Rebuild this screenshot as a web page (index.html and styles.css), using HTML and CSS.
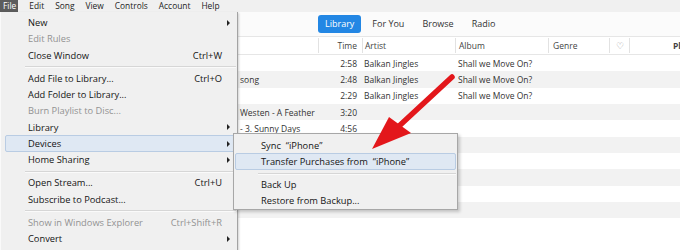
FILE: index.html
```html
<!DOCTYPE html>
<html lang="en">
<head>
    <meta charset="UTF-8">
    <title>iTunes - File menu</title>
    <link rel="stylesheet" href="styles.css">
</head>
<body>
    <div class="app">
        <div class="menubar">
            <span class="mb-item active">File</span>
            <span class="mb-item">Edit</span>
            <span class="mb-item">Song</span>
            <span class="mb-item">View</span>
            <span class="mb-item">Controls</span>
            <span class="mb-item">Account</span>
            <span class="mb-item">Help</span>
        </div>

        <div class="toolbar">
            <span class="tab selected">Library</span>
            <span class="tab">For You</span>
            <span class="tab">Browse</span>
            <span class="tab">Radio</span>
        </div>

        <div class="songs">
            <div class="row head">
                <div class="c-name"></div>
                <div class="c-time">Time</div>
                <div class="c-artist">Artist</div>
                <div class="c-album">Album</div>
                <div class="c-genre">Genre</div>
                <div class="c-heart">&#9825;</div>
                <div class="c-plays">Pl</div>
            </div>
            <div class="row">
                <div class="c-name"></div>
                <div class="c-time">2:58</div>
                <div class="c-artist">Balkan Jingles</div>
                <div class="c-album">Shall we Move On?</div>
                <div class="c-genre"></div><div class="c-heart"></div><div class="c-plays"></div>
            </div>
            <div class="row">
                <div class="c-name">song</div>
                <div class="c-time">2:48</div>
                <div class="c-artist">Balkan Jingles</div>
                <div class="c-album">Shall we Move On?</div>
                <div class="c-genre"></div><div class="c-heart"></div><div class="c-plays"></div>
            </div>
            <div class="row">
                <div class="c-name"></div>
                <div class="c-time">2:29</div>
                <div class="c-artist">Balkan Jingles</div>
                <div class="c-album">Shall we Move On?</div>
                <div class="c-genre"></div><div class="c-heart"></div><div class="c-plays"></div>
            </div>
            <div class="row">
                <div class="c-name">Westen - A Feather</div>
                <div class="c-time">3:20</div>
                <div class="c-artist"></div><div class="c-album"></div>
                <div class="c-genre"></div><div class="c-heart"></div><div class="c-plays"></div>
            </div>
            <div class="row">
                <div class="c-name">- 3. Sunny Days</div>
                <div class="c-time">4:56</div>
                <div class="c-artist"></div><div class="c-album"></div>
                <div class="c-genre"></div><div class="c-heart"></div><div class="c-plays"></div>
            </div>
            <div class="row"></div>
            <div class="row"></div>
            <div class="row"></div>
            <div class="row"></div>
            <div class="row"></div>
            <div class="row"></div>
        </div>

        <div class="menu file-menu">
            <div class="item">New<span class="sub-arrow"></span></div>
            <div class="item disabled">Edit Rules</div>
            <div class="item">Close Window<span class="shortcut">Ctrl+W</span></div>
            <div class="sep"></div>
            <div class="item">Add File to Library...<span class="shortcut">Ctrl+O</span></div>
            <div class="item">Add Folder to Library...</div>
            <div class="item disabled">Burn Playlist to Disc...</div>
            <div class="item">Library<span class="sub-arrow"></span></div>
            <div class="item hl">Devices<span class="sub-arrow"></span></div>
            <div class="item">Home Sharing<span class="sub-arrow"></span></div>
            <div class="sep"></div>
            <div class="item">Open Stream...<span class="shortcut">Ctrl+U</span></div>
            <div class="item">Subscribe to Podcast...</div>
            <div class="sep"></div>
            <div class="item disabled">Show in Windows Explorer<span class="shortcut">Ctrl+Shift+R</span></div>
            <div class="item">Convert<span class="sub-arrow"></span></div>
        </div>

        <div class="menu device-menu">
            <div class="item">Sync &nbsp;&ldquo;iPhone&rdquo;</div>
            <div class="item hl">Transfer Purchases from &nbsp;&ldquo;iPhone&rdquo;</div>
            <div class="sep"></div>
            <div class="item">Back Up</div>
            <div class="item">Restore from Backup...</div>
        </div>

        <svg class="pointer" viewBox="0 0 680 250" width="680" height="250">
            <line x1="452" y1="77" x2="398" y2="127" stroke="#e3171b" stroke-width="5.5" stroke-linecap="round"/>
            <polygon points="372,149 389,117 411,133" fill="#e3171b"/>
        </svg>
    </div>
</body>
</html>
```

FILE: styles.css
```css
* {
    box-sizing: border-box;
}

body {
    margin: 0;
    font-family: "Open Sans", "Noto Sans", sans-serif;
    color: #222;
    background-color: #fff;
}

.app {
    position: relative;
    width: 680px;
    height: 250px;
    overflow: hidden;
    background-color: #fff;
}

/* top menu bar */
.menubar {
    display: flex;
    gap: 11px;
    height: 12px;
    background-color: #f0f0f0;
    font-size: 8.4px;
    line-height: 12px;
    color: #222;
}

.mb-item.active {
    padding: 0 2px 0 3px;
    background-color: #5c5c5c;
    color: #fff;
}

/* library tabs */
.toolbar {
    display: flex;
    align-items: center;
    gap: 4px;
    height: 24px;
    padding-left: 318px;
    background-color: #fbfbfb;
    font-size: 9px;
}

.tab {
    padding: 0 7px;
    height: 18px;
    line-height: 18px;
    color: #333;
}

.tab.selected {
    background-color: #2387e4;
    color: #fff;
    border-radius: 3px;
}

/* song list */
.row {
    display: grid;
    grid-template-columns: 318px 44px 93px 93px 61px 20px 51px;
    align-items: center;
    height: 16.3px;
    font-size: 8.5px;
    color: #333;
    white-space: nowrap;
}

.row:nth-child(odd) {
    background-color: #f2f2f2;
}

.row.head {
    height: 19.2px;
    background-color: #fff;
    border-top: 1px solid #e6e6e6;
    border-bottom: 1px solid #e6e6e6;
    color: #444;
}

.row.head > div {
    height: 15px;
    line-height: 15px;
    border-left: 1px solid #e2e2e2;
}

.row.head > .c-name {
    border-left: none;
}

.c-name {
    padding-left: 240px;
    overflow: hidden;
}

.c-time {
    text-align: right;
    padding-right: 5px;
}

.c-artist {
    padding-left: 2px;
}

.c-album {
    padding-left: 3px;
}

.c-genre {
    padding-left: 4px;
}

.c-heart {
    text-align: center;
    color: #999;
    font-size: 9px;
}

.c-plays {
    padding-left: 43px;
    font-weight: bold;
    overflow: hidden;
}

/* dropdown menus */
.menu {
    position: absolute;
    background-color: #f0f0f0;
    font-size: 9.3px;
    color: #141414;
    white-space: nowrap;
}

.file-menu {
    left: 0;
    top: 12px;
    width: 238px;
    height: 250px;
    padding-top: 2.4px;
    border-left: 1px solid #fafafa;
    border-right: 1px solid #a3a3a3;
    box-shadow: 1px 1px 2px rgba(0, 0, 0, 0.18);
}

.device-menu {
    left: 233px;
    top: 133px;
    width: 225px;
    height: 77px;
    padding-top: 3px;
    border: 1px solid #a7a7a7;
    box-shadow: 2px 2px 3px rgba(0, 0, 0, 0.2);
}

.item {
    display: flex;
    align-items: center;
    height: 16.3px;
    margin: 0 1px 0 4px;
    padding-left: 22px;
    border: 1px solid transparent;
    border-radius: 2px;
}

.device-menu .item {
    margin: 0 1px;
    padding-left: 25px;
}

.item.hl {
    background-color: #dfe8f3;
    border-color: #b9cce3;
}

.item.disabled {
    color: #929292;
}

.shortcut {
    margin-left: auto;
    padding-right: 13px;
}

.sub-arrow {
    margin-left: auto;
    margin-right: 5px;
    width: 0;
    height: 0;
    border-left: 3.5px solid #222;
    border-top: 3px solid transparent;
    border-bottom: 3px solid transparent;
}

.sep {
    height: 6.9px;
    margin: 0 1px 0 24px;
    display: flex;
    align-items: center;
}

.sep::after {
    content: "";
    flex: 1;
    height: 1px;
    background-color: #d6d6d6;
    box-shadow: 0 1px 0 #fafafa;
}

.pointer {
    position: absolute;
    left: 0;
    top: 0;
    pointer-events: none;
}
```
